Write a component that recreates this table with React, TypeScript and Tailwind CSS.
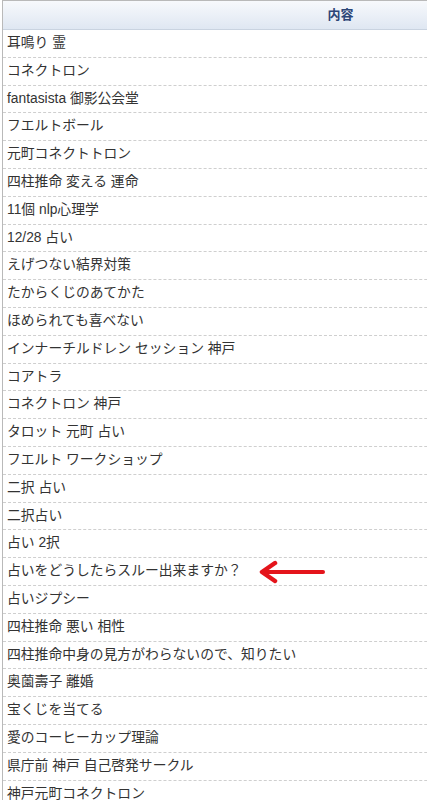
import React from 'react';

const rows: string[] = [
  '耳鳴り 霊',
  'コネクトロン',
  'fantasista 御影公会堂',
  'フエルトボール',
  '元町コネクトトロン',
  '四柱推命 変える 運命',
  '11個 nlp心理学',
  '12/28 占い',
  'えげつない結界対策',
  'たからくじのあてかた',
  'ほめられても喜べない',
  'インナーチルドレン セッション 神戸',
  'コアトラ',
  'コネクトロン 神戸',
  'タロット 元町 占い',
  'フエルト ワークショップ',
  '二択 占い',
  '二択占い',
  '占い 2択',
  '占いをどうしたらスルー出来ますか？',
  '占いジプシー',
  '四柱推命 悪い 相性',
  '四柱推命中身の見方がわらないので、知りたい',
  '奥薗壽子 離婚',
  '宝くじを当てる',
  '愛のコーヒーカップ理論',
  '県庁前 神戸 自己啓発サークル',
  '神戸元町コネクトロン',
];

// red arrow pointing at the highlighted row
const Arrow = () => (
  <svg width="68" height="24" viewBox="0 0 68 24" className="ml-[16px] shrink-0">
    <path d="M65 12 H6" stroke="#e4141b" strokeWidth="4" strokeLinecap="round" />
    <path d="M17 3 L4 12 L17 21" fill="none" stroke="#e4141b" strokeWidth="4.5" strokeLinecap="round" strokeLinejoin="round" />
  </svg>
);

export default function App() {
  return (
    <div className="w-[427px] h-[800px] overflow-hidden bg-white" style={{ fontFamily: '"Liberation Sans", "Noto Sans CJK JP", sans-serif' }}>
      <div className="ml-[2px] w-[676px] border-l border-t border-[#b9b9b9]">
        <div className="h-[29px] flex items-center justify-center border-b border-[#c9d3e0] bg-gradient-to-b from-[#f7f9fc] to-[#dfe7f2]">
          <span className="text-[13px] font-bold text-[#2b4677]">内容</span>
        </div>
        {rows.map((r, i) => (
          <div
            key={i}
            className="h-[27.8px] flex items-center pl-[4px] text-[13.8px] text-[#333] border-b border-dashed border-[#cfcfcf]"
          >
            <span>{r}</span>
            {i === 19 && <Arrow />}
          </div>
        ))}
      </div>
    </div>
  );
}
